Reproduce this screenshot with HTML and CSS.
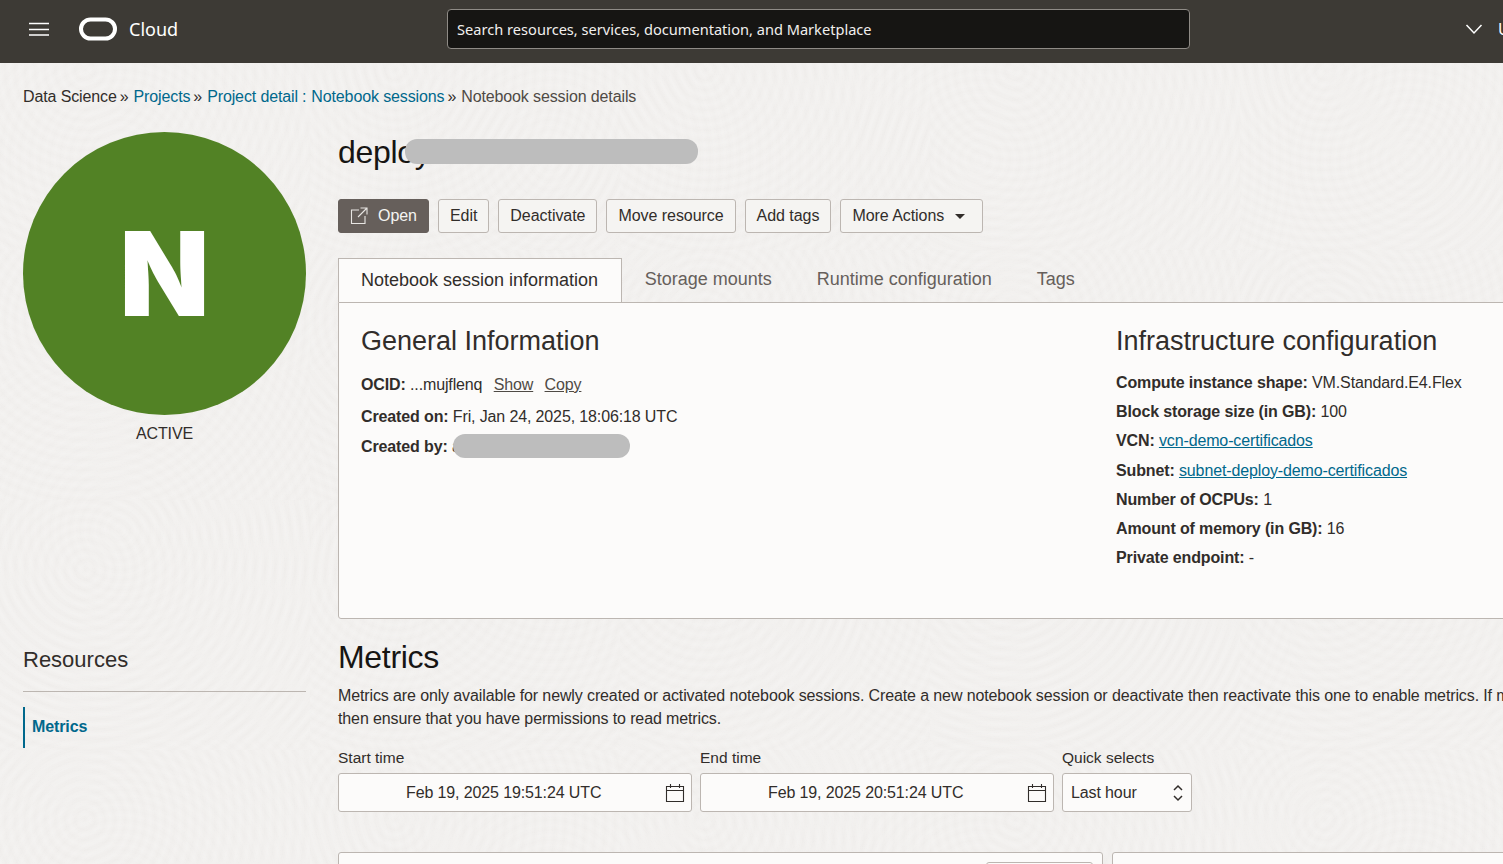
FILE: index.html
```html
<!DOCTYPE html>
<html lang="en">
<head>
    <meta charset="UTF-8">
    <meta name="viewport" content="width=device-width, initial-scale=1.0">
    <title>Notebook session details</title>
    <link rel="stylesheet" href="styles.css">
</head>
<body>
    <header class="topbar">
        <button class="menu-btn" aria-label="Menu">
            <svg width="20" height="14" viewBox="0 0 20 14"><path d="M0 1.5h20M0 7.5h20M0 13h20" stroke="#fff" stroke-width="1.6" fill="none"/></svg>
        </button>
        <svg class="logo" width="38" height="24" viewBox="0 0 38 24"><rect x="2" y="2.5" width="34" height="19" rx="9.5" fill="none" stroke="#fff" stroke-width="4"/></svg>
        <span class="brand">Cloud</span>
        <div class="search">Search resources, services, documentation, and Marketplace</div>
        <svg class="chevron" width="18" height="12" viewBox="0 0 18 12"><path d="M1.5 2l7.5 8 7.5-8" stroke="#fff" stroke-width="1.5" fill="none"/></svg>
        <span class="user-cut">U</span>
    </header>

    <main class="page">
        <nav class="crumbs">
            <span>Data Science</span><i>»</i>
            <a href="#">Projects</a><i>»</i>
            <a href="#">Project detail</a><span class="colon">:</span><a href="#">Notebook sessions</a><i>»</i>
            <span class="crumb-last">Notebook session details</span>
        </nav>

        <div class="layout">
            <aside class="side">
                <div class="status-circle">N</div>
                <div class="status-label">ACTIVE</div>
                <h3 class="res-title">Resources</h3>
                <a class="res-link" href="#">Metrics</a>
            </aside>

            <section class="content">
                <div class="title-row">
                    <h1>deploy</h1>
                    <span class="redact redact-title"></span>
                </div>

                <div class="actions">
                    <button class="btn btn-primary">
                        <svg width="18" height="18" viewBox="0 0 18 18"><path d="M9 3H1.5v13.5H15V9M10.5 1H17v6.5M17 1L8 10" stroke="#e8e6e3" stroke-width="1.1" fill="none"/></svg>
                        Open
                    </button>
                    <button class="btn">Edit</button>
                    <button class="btn">Deactivate</button>
                    <button class="btn">Move resource</button>
                    <button class="btn">Add tags</button>
                    <button class="btn btn-more">More Actions <span class="caret"></span></button>
                </div>

                <div class="tabs">
                    <div class="tab tab-active">Notebook session information</div>
                    <div class="tab">Storage mounts</div>
                    <div class="tab">Runtime configuration</div>
                    <div class="tab">Tags</div>
                </div>

                <div class="panel">
                    <div class="general">
                        <h2>General Information</h2>
                        <p class="row row-ocid"><b>OCID:</b> ...mujflenq <a class="plain" href="#">Show</a> <a class="plain" href="#">Copy</a></p>
                        <p class="row row-created"><b>Created on:</b> Fri, Jan 24, 2025, 18:06:18 UTC</p>
                        <p class="row row-by"><b>Created by:</b> a<span class="redact redact-by"></span></p>
                    </div>
                    <div class="infra">
                        <h2>Infrastructure configuration</h2>
                        <p class="row"><b>Compute instance shape:</b> VM.Standard.E4.Flex</p>
                        <p class="row"><b>Block storage size (in GB):</b> 100</p>
                        <p class="row"><b>VCN:</b> <a href="#">vcn-demo-certificados</a></p>
                        <p class="row"><b>Subnet:</b> <a href="#">subnet-deploy-demo-certificados</a></p>
                        <p class="row"><b>Number of OCPUs:</b> 1</p>
                        <p class="row"><b>Amount of memory (in GB):</b> 16</p>
                        <p class="row"><b>Private endpoint:</b> -</p>
                    </div>
                </div>

                <h2 class="metrics-title">Metrics</h2>
                <p class="metrics-text">Metrics are only available for newly created or activated notebook sessions. Create a new notebook session or deactivate then reactivate this one to enable metrics. If metrics are still not shown<br>then ensure that you have permissions to read metrics.</p>

                <div class="filters">
                    <div class="field">
                        <label>Start time</label>
                        <div class="input input-date">Feb 19, 2025 19:51:24 UTC
                            <svg class="cal" width="20" height="20" viewBox="0 0 20 20"><path d="M1.5 3.5h17v15h-17zM1.5 7.5h17M5.5 1v4M14.5 1v4" stroke="#312d2a" stroke-width="1.1" fill="none"/></svg>
                        </div>
                    </div>
                    <div class="field">
                        <label>End time</label>
                        <div class="input input-date">Feb 19, 2025 20:51:24 UTC
                            <svg class="cal" width="20" height="20" viewBox="0 0 20 20"><path d="M1.5 3.5h17v15h-17zM1.5 7.5h17M5.5 1v4M14.5 1v4" stroke="#312d2a" stroke-width="1.1" fill="none"/></svg>
                        </div>
                    </div>
                    <div class="field">
                        <label>Quick selects</label>
                        <div class="input input-select">Last hour
                            <svg class="updown" width="12" height="20" viewBox="0 0 12 20"><path d="M2 7l4-4 4 4M2 13l4 4 4-4" stroke="#312d2a" stroke-width="1.5" fill="none"/></svg>
                        </div>
                    </div>
                </div>

                <div class="charts">
                    <div class="chart-card"><span class="chart-btn"></span></div>
                    <div class="chart-card"></div>
                </div>
            </section>
        </div>
    </main>
</body>
</html>
```

FILE: styles.css
```css
/* General page styling */
html, body {
    margin: 0;
    height: 864px;
    overflow: hidden;
}

body {
    font-family: 'Liberation Sans', Arial, sans-serif;
    font-size: 16px;
    color: #312d2a;
    background-color: #f0eeec;
    /* faint fingerprint swirls */
    background-image:
        repeating-radial-gradient(circle at 85px 70px, rgba(255,255,255,0) 0, rgba(255,255,255,0.18) 5px, rgba(255,255,255,0) 10px),
        repeating-radial-gradient(circle at 120px 160px, rgba(255,255,255,0) 0, rgba(255,255,255,0.12) 5px, rgba(255,255,255,0) 10px);
    background-size: 310px 250px, 430px 370px;
}

/* Top bar */
.topbar {
    box-sizing: border-box;
    height: 63px;
    padding-bottom: 6px;
    background: #3d3a35;
    display: flex;
    align-items: center;
    color: #fff;
    font-family: 'Noto Sans', sans-serif;
    white-space: nowrap;
}

.topbar > * {
    flex-shrink: 0;
}

.menu-btn {
    background: none;
    border: none;
    padding: 0;
    margin: 0 0 0 29px;
    width: 20px;
    height: 14px;
    display: flex;
}

.logo {
    margin-left: 30px;
}

.brand {
    margin-left: 12px;
    font-size: 18px;
}

.search {
    box-sizing: border-box;
    margin-left: 269px;
    width: 743px;
    height: 40px;
    line-height: 38px;
    padding-left: 9px;
    background: #161513;
    border: 1px solid #8f8b86;
    border-radius: 4px;
    font-size: 14.6px;
    color: #f1efed;
}

.chevron {
    margin-left: 275px;
}

.user-cut {
    margin-left: 15px;
    font-size: 16px;
    color: #fff;
}

/* Breadcrumbs */
.crumbs {
    padding: 22px 23px 0;
    height: 45px;
    box-sizing: border-box;
    display: flex;
    align-items: center;
    white-space: nowrap;
    font-size: 16px;
    letter-spacing: -0.12px;
    line-height: 18px;
    color: #312d2a;
}

.crumbs i {
    font-style: normal;
    margin: 0 5px 0 3px;
}

.crumbs a {
    color: #00688c;
    text-decoration: none;
}

.crumbs .colon {
    color: #00688c;
    margin: 0 5px 0 4px;
}

.crumb-last {
    color: #4f4a45;
}

/* Two column layout */
.layout {
    display: grid;
    grid-template-columns: 283px 1200px;
    column-gap: 32px;
    padding: 24px 0 0 23px;
}

.status-circle {
    width: 283px;
    height: 283px;
    border-radius: 50%;
    background: #528225;
    color: #fff;
    font-family: Inter, sans-serif;
    font-size: 117px;
    font-weight: 900;
    line-height: 283px;
    text-align: center;
}

.status-label {
    margin-top: 9px;
    text-align: center;
    line-height: 20px;
    letter-spacing: -0.12px;
}

.res-title {
    margin: 203px 0 0;
    padding-bottom: 18px;
    border-bottom: 1px solid #bcb6b1;
    font-size: 22px;
    font-weight: normal;
    line-height: 26px;
}

.res-link {
    display: block;
    margin-top: 15px;
    height: 41px;
    line-height: 39px;
    padding-left: 7px;
    border-left: 2px solid #00688c;
    color: #00688c;
    font-weight: bold;
    text-decoration: none;
    letter-spacing: -0.12px;
}

/* Title and actions */
.title-row {
    position: relative;
    height: 40px;
}

h1 {
    margin: 0;
    font-size: 32px;
    font-weight: normal;
    line-height: 40px;
    letter-spacing: -0.3px;
    color: #161513;
}

.redact {
    background: #bdbdbd;
    border-radius: 12px;
    display: inline-block;
}

.redact-title {
    position: absolute;
    left: 67px;
    top: 7px;
    width: 293px;
    height: 25px;
}

.actions {
    display: flex;
    gap: 9px;
    margin-top: 27px;
}

.btn {
    font-family: inherit;
    font-size: 16px;
    letter-spacing: -0.05px;
    height: 34px;
    padding: 0 11px;
    background: #f5f4f2;
    border: 1px solid #bcb6b1;
    border-radius: 3px;
    color: #312d2a;
    display: flex;
    align-items: center;
    white-space: nowrap;
}

.btn-primary {
    background: #665f5b;
    border-color: #665f5b;
    color: #f5f4f2;
    gap: 10px;
}

.caret {
    display: inline-block;
    margin-left: 11px;
    margin-right: 6px;
    border-left: 5.5px solid transparent;
    border-right: 5.5px solid transparent;
    border-top: 5.5px solid #312d2a;
}

/* Tabs */
.tabs {
    display: flex;
    margin-top: 25px;
    height: 44px;
    width: 1200px;
    font-size: 18px;
    color: #665f5b;
}

.tab {
    padding: 0 22.5px;
    line-height: 42px;
    white-space: nowrap;
}

.tab-active {
    background: #fcfbfa;
    border: 1px solid #bcb6b1;
    border-bottom: none;
    color: #312d2a;
    position: relative;
    z-index: 1;
    padding: 0 23px 0 22px;
    line-height: 43px;
}

/* Info panel */
.panel {
    box-sizing: border-box;
    width: 1200px;
    height: 317px;
    margin-top: 0;
    background: #fcfbfa;
    border: 1px solid #bcb6b1;
    border-radius: 0 0 0 3px;
    padding: 20px 22px;
    display: grid;
    grid-template-columns: 755px 1fr;
}

.panel h2 {
    margin: 0 0 9px;
    font-size: 27px;
    font-weight: normal;
    line-height: 36px;
}

.row {
    margin: 0;
    line-height: 29.2px;
    letter-spacing: -0.13px;
    white-space: nowrap;
}

.row a {
    color: #00688c;
}

.row a.plain {
    color: #4f4a45;
    margin-left: 7px;
}

.row-ocid {
    margin-top: 11px;
}

.row-created {
    margin-top: 3px;
}

.row-by {
    position: relative;
    margin-top: 1px;
}

.redact-by {
    position: absolute;
    left: 92px;
    top: 2px;
    width: 177px;
    height: 24px;
}

/* Metrics section */
.metrics-title {
    margin: 18px 0 0;
    font-size: 32px;
    font-weight: normal;
    line-height: 40px;
    letter-spacing: -0.3px;
    color: #161513;
}

.metrics-text {
    margin: 7px 0 0;
    line-height: 23px;
    white-space: nowrap;
    letter-spacing: -0.12px;
}

.filters {
    display: flex;
    gap: 8px;
    margin-top: 18px;
}

.field label {
    display: block;
    font-size: 15.5px;
    line-height: 20px;
    margin-bottom: 5px;
}

.input {
    box-sizing: border-box;
    height: 39px;
    background: #fcfbfa;
    border: 1px solid #bcb6b1;
    border-radius: 3px;
    position: relative;
    line-height: 37px;
    letter-spacing: -0.12px;
}

.input-date {
    width: 354px;
    padding-left: 67px;
}

.input-select {
    width: 130px;
    padding-left: 8px;
}

.cal {
    position: absolute;
    right: 6px;
    top: 9px;
}

.updown {
    position: absolute;
    right: 7px;
    top: 9px;
}

/* Chart cards, cut off by the window */
.charts {
    display: flex;
    gap: 9px;
    margin-top: 40px;
}

.chart-card {
    box-sizing: border-box;
    flex-shrink: 0;
    width: 765px;
    height: 200px;
    background: #fcfbfa;
    border: 1px solid #bcb6b1;
    border-radius: 3px;
    position: relative;
}

.chart-btn {
    position: absolute;
    top: 9px;
    right: 9px;
    width: 105px;
    height: 30px;
    border: 1px solid #bcb6b1;
    border-radius: 3px;
}
```
